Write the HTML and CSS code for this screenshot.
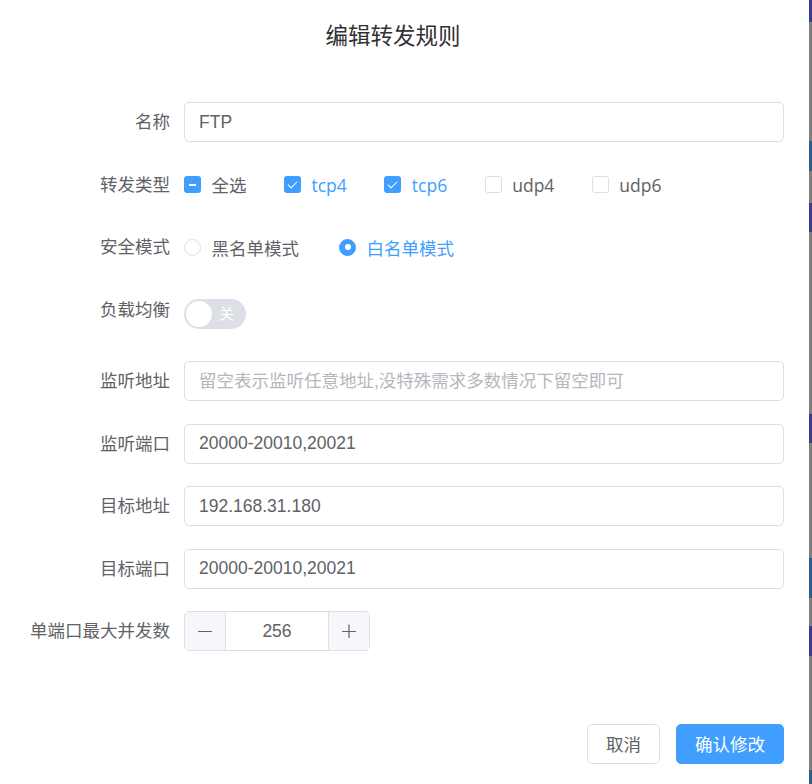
FILE: index.html
```html
<!DOCTYPE html>
<html lang="zh-CN">
<head>
  <meta charset="UTF-8">
  <meta name="viewport" content="width=device-width, initial-scale=1.0"/>
  <title>编辑转发规则</title>
  <link rel="stylesheet" href="styles.css">
</head>
<body>
  <div class="page">
    <div class="dialog">
      <div class="dialog-header">
        <span class="dialog-title">编辑转发规则</span>
      </div>

      <div class="dialog-body">
        <div class="form-item">
          <label class="form-label">名称</label>
          <div class="form-content">
            <input class="input" type="text" value="FTP">
          </div>
        </div>

        <div class="form-item">
          <label class="form-label">转发类型</label>
          <div class="form-content inline">
            <label class="checkbox is-indeterminate"><span class="checkbox-box"></span><span class="checkbox-text">全选</span></label>
            <label class="checkbox is-checked"><span class="checkbox-box"></span><span class="checkbox-text">tcp4</span></label>
            <label class="checkbox is-checked"><span class="checkbox-box"></span><span class="checkbox-text">tcp6</span></label>
            <label class="checkbox"><span class="checkbox-box"></span><span class="checkbox-text">udp4</span></label>
            <label class="checkbox"><span class="checkbox-box"></span><span class="checkbox-text">udp6</span></label>
          </div>
        </div>

        <div class="form-item">
          <label class="form-label">安全模式</label>
          <div class="form-content inline">
            <label class="radio"><span class="radio-dot"></span><span class="radio-text">黑名单模式</span></label>
            <label class="radio is-checked"><span class="radio-dot"></span><span class="radio-text">白名单模式</span></label>
          </div>
        </div>

        <div class="form-item switch-item">
          <label class="form-label">负载均衡</label>
          <div class="form-content">
            <div class="switch">
              <span class="switch-knob"></span>
              <span class="switch-text">关</span>
            </div>
          </div>
        </div>

        <div class="form-item">
          <label class="form-label">监听地址</label>
          <div class="form-content">
            <input class="input" type="text" placeholder="留空表示监听任意地址,没特殊需求多数情况下留空即可">
          </div>
        </div>

        <div class="form-item">
          <label class="form-label">监听端口</label>
          <div class="form-content">
            <input class="input" type="text" value="20000-20010,20021">
          </div>
        </div>

        <div class="form-item">
          <label class="form-label">目标地址</label>
          <div class="form-content">
            <input class="input" type="text" value="192.168.31.180">
          </div>
        </div>

        <div class="form-item">
          <label class="form-label">目标端口</label>
          <div class="form-content">
            <input class="input" type="text" value="20000-20010,20021">
          </div>
        </div>

        <div class="form-item">
          <label class="form-label">单端口最大并发数</label>
          <div class="form-content">
            <div class="input-number">
              <span class="num-btn dec">
                <svg width="14" height="14" viewBox="0 0 14 14"><path d="M0 7.5H14" stroke="#606266" stroke-width="1.2"/></svg>
              </span>
              <input class="num-input" type="text" value="256">
              <span class="num-btn inc">
                <svg width="14" height="14" viewBox="0 0 14 14"><path d="M0 7.5H14M7 0.5V14.5" stroke="#606266" stroke-width="1.2"/></svg>
              </span>
            </div>
          </div>
        </div>
      </div>

      <div class="dialog-footer">
        <button class="btn">取消</button>
        <button class="btn btn-primary">确认修改</button>
      </div>
    </div>
    <div class="backdrop"></div>
  </div>
</body>
</html>
```

FILE: styles.css
```css
* {
  box-sizing: border-box;
}

body {
  margin: 0;
  padding: 0;
  font-family: 'Liberation Sans', 'Noto Sans CJK SC', sans-serif;
  color: #606266;
  background: #808080;
}

.page {
  display: flex;
  height: 784px;
  overflow: hidden;
}

.dialog {
  width: 809px;
  flex-shrink: 0;
  background: #ffffff;
}

.backdrop {
  flex: 1;
  background: linear-gradient(to bottom,
    #3c3c8c 0, #3c3c8c 22px,
    #808080 22px, #808080 141px,
    #2f5f8c 141px, #2f5f8c 171px,
    #808080 171px, #808080 203px,
    #3c3c8c 203px, #3c3c8c 232px,
    #808080 232px, #808080 414px,
    #3c3c8c 414px, #3c3c8c 443px,
    #808080 443px, #808080 558px,
    #2f5f8c 558px, #2f5f8c 598px,
    #808080 598px, #808080 626px,
    #3c3c8c 626px, #3c3c8c 656px,
    #808080 656px, #808080 770px,
    #2f5f8c 770px);
}

/* header */
.dialog-header {
  padding: 22px 48px 12px 25px;
  text-align: center;
}

.dialog-title {
  font-size: 22.5px;
  line-height: 30px;
  color: #303133;
}

/* body */
.dialog-body {
  padding: 38px 25px 37px;
}

.form-item {
  display: flex;
  margin-bottom: 22.5px;
}

.form-label {
  width: 159px;
  flex-shrink: 0;
  padding-right: 14px;
  text-align: right;
  font-size: 17.5px;
  line-height: 40px;
  color: #606266;
}

.form-content {
  flex: 1;
  min-height: 40px;
}

.form-content.inline {
  display: flex;
  align-items: center;
}

.input {
  width: 100%;
  height: 40px;
  padding: 0 14px;
  border: 1px solid #dcdfe6;
  border-radius: 5px;
  font-family: inherit;
  font-size: 17.5px;
  color: #606266;
  outline: none;
  background: #fff;
}

.input::placeholder {
  color: #b4b7bd;
}

/* checkbox */
.checkbox {
  display: flex;
  align-items: center;
  margin-right: 37.5px;
  font-family: 'Open Sans', 'Noto Sans CJK SC', sans-serif;
  font-size: 17.5px;
  color: #606266;
  cursor: pointer;
}

.checkbox-box {
  position: relative;
  width: 17px;
  height: 17px;
  border: 1px solid #dcdfe6;
  border-radius: 2.5px;
  background: #fff;
}

.checkbox-text {
  padding-left: 10.5px;
}

.checkbox.is-checked .checkbox-box,
.checkbox.is-indeterminate .checkbox-box {
  background: #409eff;
  border-color: #409eff;
}

.checkbox.is-checked .checkbox-text {
  color: #409eff;
}

.checkbox.is-checked .checkbox-box::after {
  content: "";
  position: absolute;
  left: 5px;
  top: 2px;
  width: 4px;
  height: 8px;
  border: 1.2px solid #fff;
  border-top: 0;
  border-left: 0;
  transform: rotate(45deg);
}

.checkbox.is-indeterminate .checkbox-box::after {
  content: "";
  position: absolute;
  left: 4px;
  right: 4px;
  top: 6.5px;
  height: 2px;
  background: #fff;
}

/* radio */
.radio {
  display: flex;
  align-items: center;
  margin-right: 40px;
  font-size: 17.5px;
  color: #606266;
  cursor: pointer;
}

.radio-dot {
  position: relative;
  width: 17px;
  height: 17px;
  border: 1px solid #dcdfe6;
  border-radius: 50%;
  background: #fff;
}

.radio-text {
  padding-left: 10.5px;
}

.radio.is-checked .radio-dot {
  background: #409eff;
  border-color: #409eff;
}

.radio.is-checked .radio-dot::after {
  content: "";
  position: absolute;
  left: 50%;
  top: 50%;
  width: 6px;
  height: 6px;
  margin: -3px 0 0 -3px;
  border-radius: 50%;
  background: #fff;
}

.radio.is-checked .radio-text {
  color: #409eff;
}

/* switch */
.switch-item .form-content {
  min-height: 49px;
  padding-top: 9.5px;
}

.switch {
  position: relative;
  width: 62px;
  height: 30px;
  border-radius: 15px;
  background: #dcdfe6;
}

.switch-knob {
  position: absolute;
  left: 2px;
  top: 2px;
  width: 26px;
  height: 26px;
  border-radius: 50%;
  background: #fff;
}

.switch-text {
  position: absolute;
  left: 35px;
  top: 0;
  font-size: 15px;
  line-height: 30px;
  color: #fff;
}

/* input number */
.input-number {
  display: flex;
  width: 186px;
  height: 40px;
  border: 1px solid #dcdfe6;
  border-radius: 5px;
  overflow: hidden;
}

.num-btn {
  display: flex;
  align-items: center;
  justify-content: center;
  width: 41px;
  flex-shrink: 0;
  background: #f5f7fa;
}

.num-btn.dec {
  border-right: 1px solid #dcdfe6;
}

.num-btn.inc {
  border-left: 1px solid #dcdfe6;
}

.num-input {
  flex: 1;
  min-width: 0;
  border: none;
  outline: none;
  text-align: center;
  font-family: inherit;
  font-size: 17.5px;
  color: #606266;
}

/* footer */
.dialog-footer {
  display: flex;
  justify-content: flex-end;
  gap: 16px;
  padding: 13px 25px 25px;
}

.btn {
  height: 40px;
  padding: 0 18px;
  border: 1px solid #dcdfe6;
  border-radius: 5px;
  background: #fff;
  font-family: inherit;
  font-size: 17.5px;
  color: #606266;
  cursor: pointer;
}

.btn-primary {
  background: #409eff;
  border-color: #409eff;
  color: #fff;
}
```
